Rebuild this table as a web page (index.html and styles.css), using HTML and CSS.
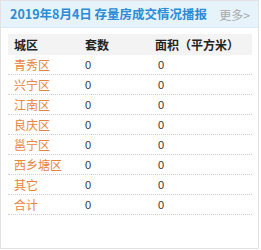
FILE: index.html
```html
<!DOCTYPE html>
<html lang="zh-CN">
<head>
<meta charset="utf-8">
<link rel="stylesheet" href="styles.css">
</head>
<body>
<div class="box">
  <div class="head">
    <span class="title">2019年8月4日 存量房成交情况播报</span>
    <span class="more">更多&gt;</span>
  </div>
  <div class="table">
    <div class="row th"><span>城区</span><span>套数</span><span>面积（平方米）</span></div>
    <div class="row"><span class="area">青秀区</span><span class="n1">0</span><span class="n2">0</span></div>
    <div class="row"><span class="area">兴宁区</span><span class="n1">0</span><span class="n2">0</span></div>
    <div class="row"><span class="area">江南区</span><span class="n1">0</span><span class="n2">0</span></div>
    <div class="row"><span class="area">良庆区</span><span class="n1">0</span><span class="n2">0</span></div>
    <div class="row"><span class="area">邕宁区</span><span class="n1">0</span><span class="n2">0</span></div>
    <div class="row"><span class="area">西乡塘区</span><span class="n1">0</span><span class="n2">0</span></div>
    <div class="row"><span class="area">其它</span><span class="n1">0</span><span class="n2">0</span></div>
    <div class="row"><span class="area">合计</span><span class="n1">0</span><span class="n2">0</span></div>
  </div>
</div>
</body>
</html>
```

FILE: styles.css
```css
html, body {
  margin: 0;
  padding: 0;
  background: #fff;
}
body {
  font-family: "Noto Sans CJK SC", "Liberation Sans", sans-serif;
  font-size: 12px;
}
.box {
  width: 257px;
  height: 247px;
  border: 1px solid #e2e2e2;
  box-sizing: content-box;
}
.head {
  height: 26px;
  background: #e6f3fb;
  border-bottom: 1px solid #d9ebf7;
  display: flex;
  align-items: center;
  justify-content: space-between;
  padding: 0 8px 0 9px;
}
.title {
  color: #2b8bd4;
  font-weight: bold;
  font-size: 12.5px;
  line-height: 26px;
}
.more {
  color: #a8a8a8;
  font-size: 12px;
}
.table {
  margin: 6px 6px 0 7px;
}
.row {
  display: grid;
  grid-template-columns: 77px 70px 1fr;
  height: 19px;
  align-items: center;
  border-bottom: 1px dotted #cfcfcf;
  color: #333;
}
.row.th {
  height: 21px;
  background: #f3f3f3;
  border-bottom: none;
  font-weight: bold;
  color: #222;
}
.row span:first-child {
  padding-left: 6px;
}
.row.th span:nth-child(3) {
  padding-left: 0;
}
.area {
  color: #e8843c;
}
.n1, .n2 {
  font-family: "Liberation Sans", sans-serif;
  font-size: 11px;
}
.n2 {
  padding-left: 3px;
}
```
